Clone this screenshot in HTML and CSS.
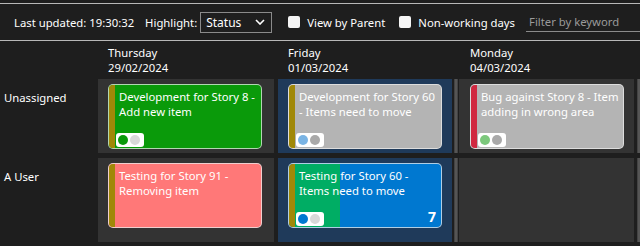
FILE: index.html
```html
<!DOCTYPE html>
<html>
<head>
<meta charset="utf-8">
<link rel="stylesheet" href="styles.css">
</head>
<body>
<div class="toolbar">
  <span class="updated">Last updated: 19:30:32</span>
  <label class="hl">Highlight:</label>
  <div class="select"><span>Status</span><svg class="chev" width="10" height="6" viewBox="0 0 10 6"><path d="M1 1 L5 5 L9 1" fill="none" stroke="#fff" stroke-width="1.6"/></svg></div>
  <span class="check"><span class="box"></span>View by Parent</span>
  <span class="check nw"><span class="box"></span>Non-working days</span>
  <div class="filter">Filter by keyword</div>
</div>
<div class="board">
  <div class="corner"></div>
  <div class="day"><div>Thursday</div><div>29/02/2024</div></div>
  <div class="sp"></div>
  <div class="day"><div>Friday</div><div>01/03/2024</div></div>
  <div class="wk"></div>
  <div class="day mon"><div>Monday</div><div>04/03/2024</div></div>
  <div class="wk"></div>

  <div class="rowlabel">Unassigned</div>
  <div class="cell">
    <div class="card green"><div class="bar"></div><div class="title">Development for Story 8 - Add new item</div>
      <div class="pill"><i style="background:#0a9a0a"></i><i style="background:#d9d9d9"></i></div></div>
  </div>
  <div class="sp"></div>
  <div class="cell today">
    <div class="card grey"><div class="bar"></div><div class="title">Development for Story 60 - Items need to move</div>
      <div class="pill"><i style="background:#7ab4e4"></i><i style="background:#a9a9a9"></i></div></div>
  </div>
  <div class="wk"><div class="wkbar"></div></div>
  <div class="cell mon">
    <div class="card grey"><div class="bar red"></div><div class="title">Bug against Story 8 - Item adding in wrong area</div>
      <div class="pill"><i style="background:#7cc87c"></i><i style="background:#a9a9a9"></i></div></div>
  </div>
  <div class="wk"><div class="wkbar end"></div></div>

  <div class="gaprow"></div>

  <div class="rowlabel">A User</div>
  <div class="cell">
    <div class="card pink"><div class="bar"></div><div class="title">Testing for Story 91 - Removing item</div></div>
  </div>
  <div class="sp"></div>
  <div class="cell today">
    <div class="card blue"><div class="bar"></div><div class="prog"></div><div class="title">Testing for Story 60 - Items need to move</div>
      <div class="pill"><i style="background:#0078d0"></i><i style="background:#d9d9d9"></i></div>
      <div class="count">7</div></div>
  </div>
  <div class="wk"><div class="wkbar"></div></div>
  <div class="cell mon"></div>
  <div class="wk"><div class="wkbar end"></div></div>
</div>
</body>
</html>
```
FILE: styles.css
```css
html, body { margin: 0; padding: 0; }
body {
  background: #1e1e1e;
  color: #fff;
  font-family: "Noto Sans", sans-serif;
  font-size: 11.3px;
  width: 640px;
  height: 246px;
  overflow: hidden;
}
.toolbar {
  margin-top: 3px;
  height: 36px;
  border-top: 1px solid #b8b8b8;
  border-bottom: 1px solid #b8b8b8;
  display: flex;
  align-items: center;
  padding-left: 14px;
  white-space: nowrap;
}
.updated { margin-right: 11px; }
.hl { margin-right: 3px; }
.select {
  border: 1px solid #8a8a8a;
  display: flex;
  align-items: center;
  justify-content: space-between;
  padding: 0 6px 0 5px;
  box-sizing: border-box;
  width: 72px;
  height: 21px;
  font-size: 12px;
}
.check { display: flex; align-items: center; margin-left: 16px; }
.check .box {
  width: 12px; height: 12px; background: #f4f4f4; border-radius: 2px;
  margin-right: 7px;
}
.check.nw { margin-left: 14px; }
.filter {
  margin-left: 11px;
  color: #9a9a9a;
  border-bottom: 1px solid #8a8a8a;
  padding: 0 0 2px 3px;
  flex: 1;
  margin-top: 2px;
}
.board {
  display: grid;
  grid-template-columns: 98px 176px 4px 174px 7px 175px 8px;
  grid-template-rows: 38px 74px 5px 84px;
}
.day { padding: 4px 0 0 10px; line-height: 15px; }
.day.mon { padding-left: 11px; }
.rowlabel { padding-left: 4px; padding-top: 11px; line-height: 16px; }
.gaprow { grid-column: 1 / -1; }
.cell { background: #333333; padding: 5px 0 0 10px; }
.cell.mon { padding-left: 11px; }
.cell.today { background: #1f3a5a; }
.wk { display: flex; }
.wkbar { width: 4px; margin-left: 2px; background: linear-gradient(90deg, #3a3a3a, #5e5e5e 50%, #3a3a3a); }
.wkbar.end { margin-left: 3px; }
.card {
  position: relative;
  width: 154px;
  height: 65px;
  box-sizing: border-box;
  border: 1px solid rgba(235,235,235,0.75);
  border-radius: 5px;
  overflow: hidden;
  padding: 4px 1px 0 10px;
  line-height: 15px;
  font-size: 11.3px;
}
.card .bar { position: absolute; left: 0; top: 0; bottom: 0; width: 6px; background: #a08808; }
.card .bar.red { background: #d02840; }
.green { background: #0a9a0a; }
.grey { background: #b4b4b4; }
.pink { background: #ff7878; }
.blue { background: #0078d0; }
.prog { position: absolute; left: 6px; top: 0; bottom: 0; width: 45px; background: #00ad64; }
.title { position: relative; }
.pill {
  position: absolute; left: 7px; bottom: 1px;
  width: 28px; height: 14px; background: #fff; border-radius: 3px;
  display: flex; align-items: center; gap: 2px; padding-left: 2px; box-sizing: border-box;
}
.pill i { width: 10px; height: 10px; border-radius: 50%; display: block; }
.count { position: absolute; right: 5px; bottom: 2px; font-weight: bold; font-size: 14px; line-height: 16px; }
```
